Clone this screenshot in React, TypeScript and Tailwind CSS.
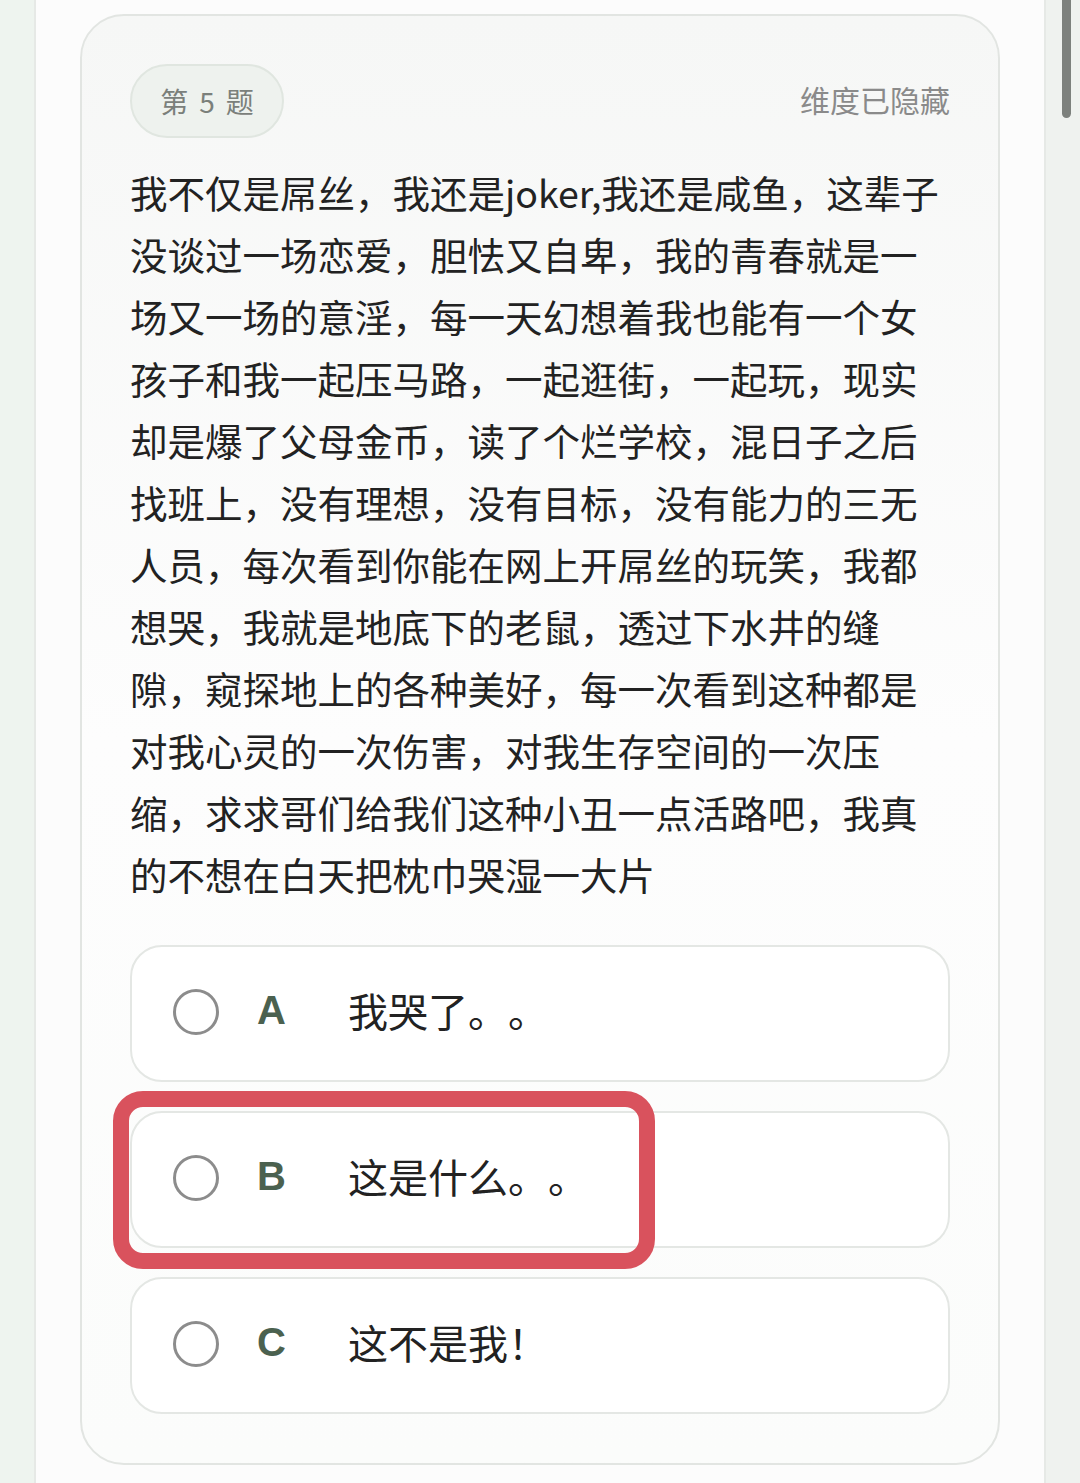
import React from 'react';

const lines = [
    '我不仅是屌丝，我还是joker,我还是咸鱼，这辈子',
    '没谈过一场恋爱，胆怯又自卑，我的青春就是一',
    '场又一场的意淫，每一天幻想着我也能有一个女',
    '孩子和我一起压马路，一起逛街，一起玩，现实',
    '却是爆了父母金币，读了个烂学校，混日子之后',
    '找班上，没有理想，没有目标，没有能力的三无',
    '人员，每次看到你能在网上开屌丝的玩笑，我都',
    '想哭，我就是地底下的老鼠，透过下水井的缝',
    '隙，窥探地上的各种美好，每一次看到这种都是',
    '对我心灵的一次伤害，对我生存空间的一次压',
    '缩，求求哥们给我们这种小丑一点活路吧，我真',
    '的不想在白天把枕巾哭湿一大片',
];

const options = [
    { key: 'A', text: '我哭了。。' },
    { key: 'B', text: '这是什么。。' },
    { key: 'C', text: '这不是我！' },
];

const OptionRow: React.FC<{ letter: string; text: string }> = ({ letter, text }) => (
    <div className="h-[137px] rounded-[32px] border-2 border-[#e4e7e4] bg-white flex items-center pl-[41px]">
        <div className="w-[46px] h-[46px] mb-[4px] rounded-full border-[3px] border-[#8c8c8c] shrink-0" />
        <div className="ml-[38px] mb-[8px] w-[91px] text-[40px] font-bold text-[#4b614f] font-['Liberation_Sans',sans-serif] leading-none">
            {letter}
        </div>
        <div className="mb-[8px] text-[40px] text-[#222] leading-none [text-spacing-trim:space-all]">{text}</div>
    </div>
);

export default function App() {
    return (
        <div className="flex h-[1483px] overflow-hidden bg-[#eef3ef] font-['Noto_Sans_CJK_SC','Noto_Sans',sans-serif]">
            <div className="w-[34px] shrink-0 bg-[#eef4ef]" />
            <div className="flex-1 bg-[#fcfcfc] border-x-2 border-[#e6e9e6] pl-[44px] pt-[14px]">
                <div className="w-[920px] rounded-[44px] border-2 border-[#e2e5e2] bg-gradient-to-b from-[#f6f7f6] via-[#fdfdfd] to-[#fbfcfb] px-[48px] pt-[48px] pb-[49px]">
                    {/* header */}
                    <div className="flex items-center justify-between">
                        <div className="w-[154px] h-[74px] rounded-full bg-[#eef2ee] border-2 border-[#e0e6e0] flex items-center justify-center gap-[11px] text-[28px] text-[#7b807b]">
                            <span>第</span>
                            <span>5</span>
                            <span>题</span>
                        </div>
                        <div className="mb-[3px] text-[30px] text-[#8a8a8a]">维度已隐藏</div>
                    </div>

                    {/* question */}
                    <div className="mt-[23px] text-[37.5px] leading-[62px] text-[#222]">
                        {lines.map((l, i) => (
                            <div key={i} className="whitespace-nowrap">{l}</div>
                        ))}
                    </div>

                    {/* options */}
                    <div className="relative mt-[40px] flex flex-col gap-[29px]">
                        {options.map((o) => (
                            <OptionRow key={o.key} letter={o.key} text={o.text} />
                        ))}
                        <div className="absolute left-[-17px] top-[146px] w-[542px] h-[178px] rounded-[30px] border-[16px] border-[#d9525d] pointer-events-none" />
                    </div>
                </div>
            </div>
            <div className="relative w-[34px] shrink-0 bg-[#eff2ef]">
                <div className="absolute left-[16px] top-0 w-[9px] h-[118px] rounded-b-full bg-[#7d817d]" />
            </div>
        </div>
    );
}
